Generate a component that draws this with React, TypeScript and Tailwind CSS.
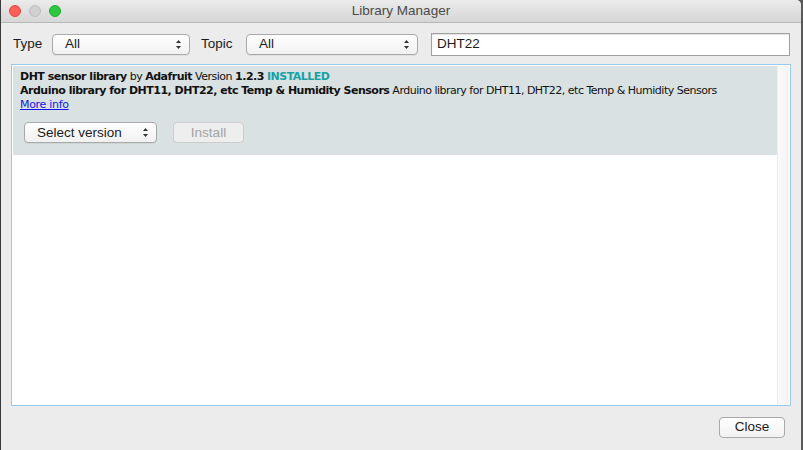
import React from "react";

// Little up/down chevrons used by the mac-style popup buttons
function Stepper() {
  return (
    <svg width="7" height="11" viewBox="0 0 7 11" className="shrink-0">
      <path d="M3.5 1 L6 4 L1 4 Z" fill="#333" />
      <path d="M3.5 10 L6 7 L1 7 Z" fill="#333" />
    </svg>
  );
}

function PopupButton({ label, width, padLeft = "pl-3" }: { label: string; width: string; padLeft?: string }) {
  return (
    <div
      className={`${width} h-[21px] flex items-center justify-between ${padLeft} pr-[7px] rounded-[4px] border border-[#a9a9a9] bg-gradient-to-b from-white to-[#f1f1f1] shadow-[0_1px_0_rgba(0,0,0,0.05)] text-[13.5px] text-[#1b1b1b]`}
    >
      <span>{label}</span>
      <Stepper />
    </div>
  );
}

export default function App() {
  const font = { fontFamily: '"Liberation Sans", Arial, sans-serif' };
  const listFont = { fontFamily: '"DejaVu Sans", Verdana, sans-serif' };

  return (
    <div className="w-[803px] h-[450px] overflow-hidden bg-[#5a5a5a]" style={font}>
      <div className="w-[801px] h-[450px] flex flex-col bg-[#ececec] border-l border-[#3c3c3c] rounded-tr-[5px] overflow-hidden">
        {/* Title bar */}
        <div className="relative h-[23px] shrink-0 flex items-center justify-center bg-gradient-to-b from-[#ebebeb] to-[#d6d6d6] border-b border-[#b8b8b8]">
          <div className="absolute left-[8px] top-[5px] flex gap-[8px]">
            <div className="w-[12px] h-[12px] rounded-full bg-[#fc5f57] border border-[#e2463f]" />
            <div className="w-[12px] h-[12px] rounded-full bg-[#d0d0d0] border border-[#bdbdbd]" />
            <div className="w-[12px] h-[12px] rounded-full bg-[#2dc840] border border-[#1eae30]" />
          </div>
          <span className="text-[13.5px] text-[#4a4a4a]">Library Manager</span>
        </div>

        {/* Filter row */}
        <div className="flex items-center h-[24px] mt-[9px] pl-[12px] text-[13.5px] text-[#1b1b1b]">
          <span className="w-[39px]">Type</span>
          <PopupButton label="All" width="w-[138px]" />
          <span className="ml-[11px] w-[45px]">Topic</span>
          <PopupButton label="All" width="w-[172px]" />
          <div className="ml-[13px] w-[359px] h-[23px] flex items-center px-[5px] bg-white border border-[#a0a0a0] shadow-[inset_0_1px_1px_rgba(0,0,0,0.12)]">
            DHT22
          </div>
        </div>

        {/* Library list */}
        <div className="ml-[10px] mt-[8px] w-[780px] h-[342px] border border-[#9cc9ee] bg-white p-[1px] flex">
          <div className="flex-1 flex flex-col">
            <div className="h-[89px] bg-[#d9e1e2] px-[7px] pt-[4px] text-[11px] leading-[14px] text-[#111]" style={listFont}>
              <div className="tracking-[-0.5px]">
                <span className="font-bold">DHT sensor library</span> by{" "}
                <span className="font-bold">Adafruit</span> Version{" "}
                <span className="font-bold">1.2.3</span>{" "}
                <span className="font-bold text-[#17a1a5]">INSTALLED</span>
              </div>
              <div className="tracking-[-0.5px] whitespace-nowrap">
                <span className="font-bold">Arduino library for DHT11, DHT22, etc Temp &amp; Humidity Sensors</span>{" "}
                Arduino library for DHT11, DHT22, etc Temp &amp; Humidity Sensors
              </div>
              <div className="tracking-[-0.3px]">
                <span className="text-[#1515e8] underline">More info</span>
              </div>
              <div className="flex gap-[16px] mt-[10px] pl-[4px]" style={font}>
                <PopupButton label="Select version" width="w-[133px]" />
                <div className="w-[71px] h-[21px] flex items-center justify-center rounded-[4px] border border-[#cdcdcd] bg-[#eeeeee] text-[13.5px] text-[#a3a3a3]">
                  Install
                </div>
              </div>
            </div>
            <div className="flex-1 bg-white" />
          </div>
          <div className="w-[12px] bg-gradient-to-r from-[#fafafa] to-[#f3f3f3] border-l border-[#ececec]" />
        </div>

        {/* Footer */}
        <div className="flex justify-end pr-[16px] mt-[11px]">
          <div className="w-[66px] h-[21px] flex items-center justify-center rounded-[4px] border border-[#a9a9a9] bg-gradient-to-b from-white to-[#f1f1f1] text-[13.5px] text-[#1b1b1b]">
            Close
          </div>
        </div>
      </div>
    </div>
  );
}
